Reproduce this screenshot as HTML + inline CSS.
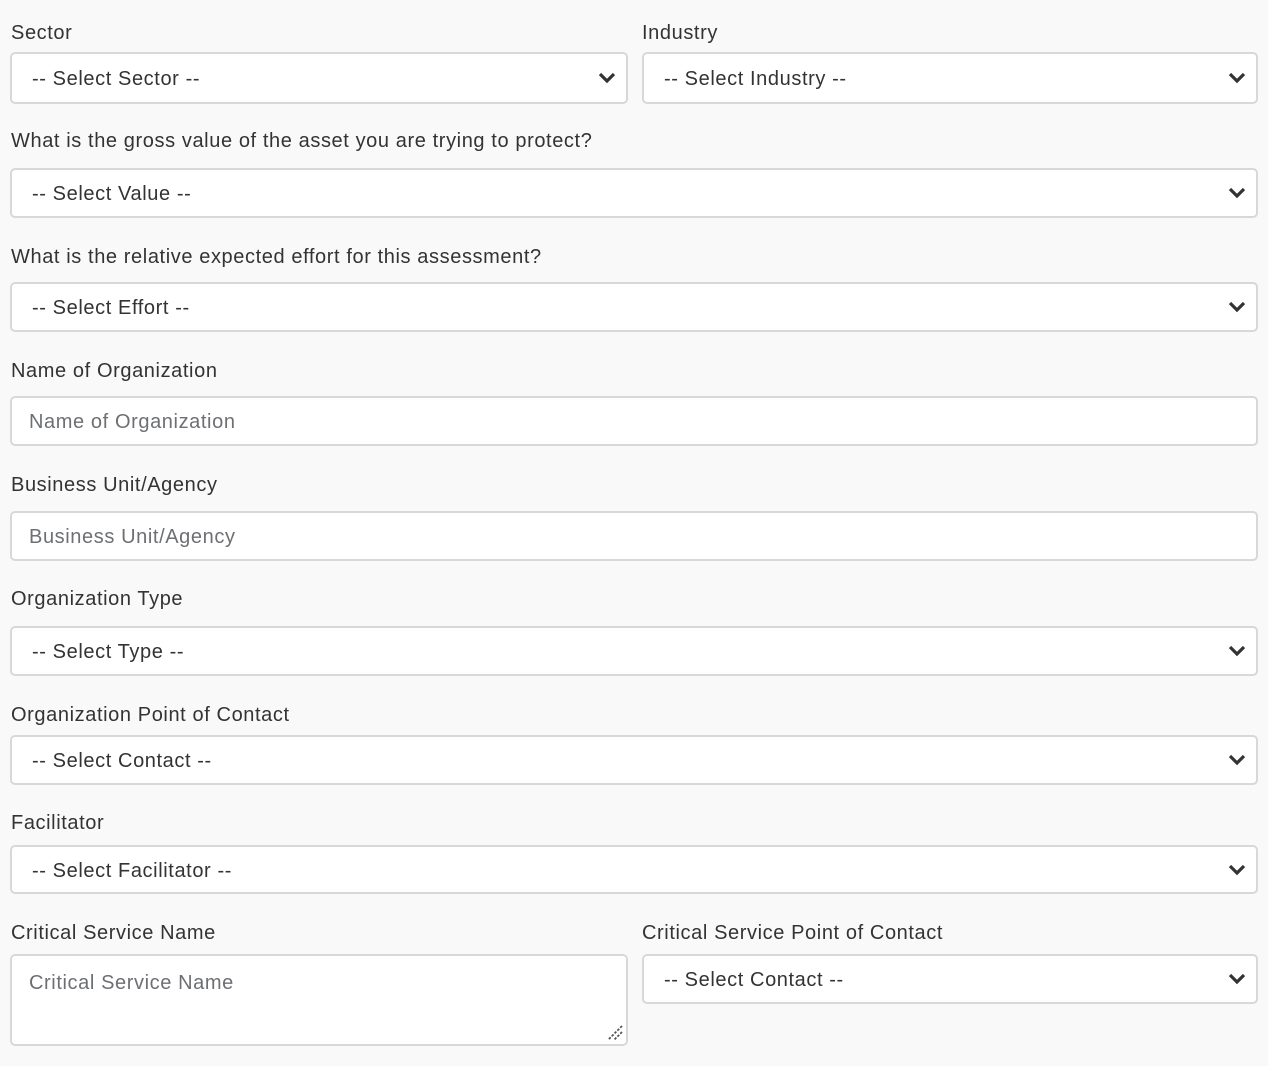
<!DOCTYPE html>
<html><head><meta charset="utf-8"><style>
body{margin:0;background:#f9f9f9;width:1268px;height:1066px;position:relative;overflow:hidden;font-family:"Liberation Sans",Arial,sans-serif;color:#333;}
.l{position:absolute;font-size:20px;line-height:24px;white-space:nowrap;letter-spacing:0.6px;}
.b{position:absolute;background:#fff;border:2px solid #d6d8db;border-radius:5px;box-sizing:border-box;font-size:20px;line-height:24px;white-space:nowrap;letter-spacing:0.6px;}
.b span{position:absolute;left:20px;top:50%;transform:translateY(-50%);margin-top:1px;}
.b.p span{left:17px;color:#6d6f73;}
.b svg{position:absolute;right:10px;top:50%;margin-top:-6px;}
</style></head><body>
<div class="l" style="left:11px;top:21px">Sector</div>
<div class="l" style="left:642px;top:21px">Industry</div>
<div class="b" style="left:10px;top:52px;width:618px;height:52px"><span>-- Select Sector --</span><svg width="18" height="12" viewBox="0 0 18 12"><path d="M2 2l7 7 7-7" fill="none" stroke="#333" stroke-width="3.2"/></svg></div>
<div class="b" style="left:642px;top:52px;width:616px;height:52px"><span>-- Select Industry --</span><svg width="18" height="12" viewBox="0 0 18 12"><path d="M2 2l7 7 7-7" fill="none" stroke="#333" stroke-width="3.2"/></svg></div>

<div class="l" style="left:11px;top:129px">What is the gross value of the asset you are trying to protect?</div>
<div class="b" style="left:10px;top:168px;width:1248px;height:50px"><span>-- Select Value --</span><svg width="18" height="12" viewBox="0 0 18 12"><path d="M2 2l7 7 7-7" fill="none" stroke="#333" stroke-width="3.2"/></svg></div>

<div class="l" style="left:11px;top:245px">What is the relative expected effort for this assessment?</div>
<div class="b" style="left:10px;top:282px;width:1248px;height:50px"><span>-- Select Effort --</span><svg width="18" height="12" viewBox="0 0 18 12"><path d="M2 2l7 7 7-7" fill="none" stroke="#333" stroke-width="3.2"/></svg></div>

<div class="l" style="left:11px;top:359px">Name of Organization</div>
<div class="b p" style="left:10px;top:396px;width:1248px;height:50px"><span>Name of Organization</span></div>

<div class="l" style="left:11px;top:473px">Business Unit/Agency</div>
<div class="b p" style="left:10px;top:511px;width:1248px;height:50px"><span>Business Unit/Agency</span></div>

<div class="l" style="left:11px;top:587px">Organization Type</div>
<div class="b" style="left:10px;top:626px;width:1248px;height:50px"><span>-- Select Type --</span><svg width="18" height="12" viewBox="0 0 18 12"><path d="M2 2l7 7 7-7" fill="none" stroke="#333" stroke-width="3.2"/></svg></div>

<div class="l" style="left:11px;top:703px">Organization Point of Contact</div>
<div class="b" style="left:10px;top:735px;width:1248px;height:50px"><span>-- Select Contact --</span><svg width="18" height="12" viewBox="0 0 18 12"><path d="M2 2l7 7 7-7" fill="none" stroke="#333" stroke-width="3.2"/></svg></div>

<div class="l" style="left:11px;top:811px">Facilitator</div>
<div class="b" style="left:10px;top:845px;width:1248px;height:49px"><span>-- Select Facilitator --</span><svg width="18" height="12" viewBox="0 0 18 12"><path d="M2 2l7 7 7-7" fill="none" stroke="#333" stroke-width="3.2"/></svg></div>

<div class="l" style="left:11px;top:921px">Critical Service Name</div>
<div class="l" style="left:642px;top:921px">Critical Service Point of Contact</div>
<div class="b p" style="left:10px;top:954px;width:618px;height:92px"><span style="top:26px">Critical Service Name</span>
<svg width="18" height="18" viewBox="0 0 18 18" style="right:2px;top:auto;bottom:2px;margin:0"><path d="M16 2L2 16M16 8L8 16" stroke="#555" stroke-width="1.8" stroke-dasharray="2.5 1.5" fill="none"/></svg></div>
<div class="b" style="left:642px;top:954px;width:616px;height:50px"><span>-- Select Contact --</span><svg width="18" height="12" viewBox="0 0 18 12"><path d="M2 2l7 7 7-7" fill="none" stroke="#333" stroke-width="3.2"/></svg></div>
</body></html>
